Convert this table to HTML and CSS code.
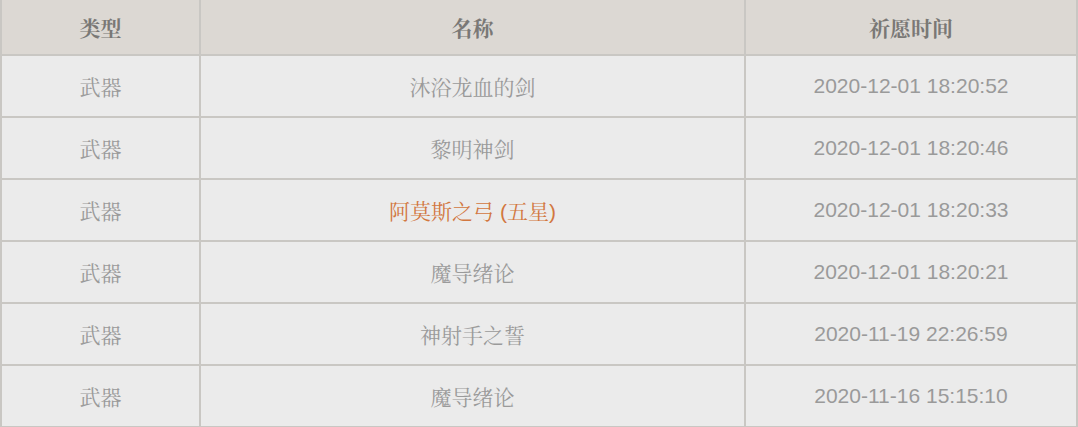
FILE: index.html
```html
<!DOCTYPE html>
<html lang="zh-CN">
<head>
<meta charset="utf-8">
<link rel="stylesheet" href="styles.css">
</head>
<body>
<table class="wish-table">
  <colgroup>
    <col class="c-type">
    <col class="c-name">
    <col class="c-time">
  </colgroup>
  <thead>
    <tr><th>类型</th><th>名称</th><th>祈愿时间</th></tr>
  </thead>
  <tbody>
    <tr><td>武器</td><td>沐浴龙血的剑</td><td class="time">2020-12-01 18:20:52</td></tr>
    <tr><td>武器</td><td>黎明神剑</td><td class="time">2020-12-01 18:20:46</td></tr>
    <tr><td>武器</td><td class="star5">阿莫斯之弓 (五星)</td><td class="time">2020-12-01 18:20:33</td></tr>
    <tr><td>武器</td><td>魔导绪论</td><td class="time">2020-12-01 18:20:21</td></tr>
    <tr><td>武器</td><td>神射手之誓</td><td class="time">2020-11-19 22:26:59</td></tr>
    <tr><td>武器</td><td>魔导绪论</td><td class="time">2020-11-16 15:15:10</td></tr>
  </tbody>
</table>
</body>
</html>
```

FILE: styles.css
```css
html, body {
  margin: 0;
  padding: 0;
  background: #ffffff;
}
.wish-table {
  width: 1076px;
  border-collapse: collapse;
  table-layout: fixed;
  font-family: "Liberation Sans", Arial, "Noto Serif CJK SC", "Noto Sans CJK SC", sans-serif;
  font-size: 21px;
}
.c-type { width: 199px; }
.c-name { width: 545px; }
.c-time { width: 332px; }
.wish-table th,
.wish-table td {
  border: 2px solid #c9c7c3;
  text-align: center;
  padding: 0;
}
.wish-table thead th {
  border-top: none;
  background: #dcd8d3;
  color: #7a7876;
  font-weight: bold;
  height: 54px;
}
.wish-table tbody td {
  background: #ebebeb;
  color: #9a9a9a;
  height: 60px;
}
.wish-table tbody td.star5 {
  color: #d2773f;
}
```
